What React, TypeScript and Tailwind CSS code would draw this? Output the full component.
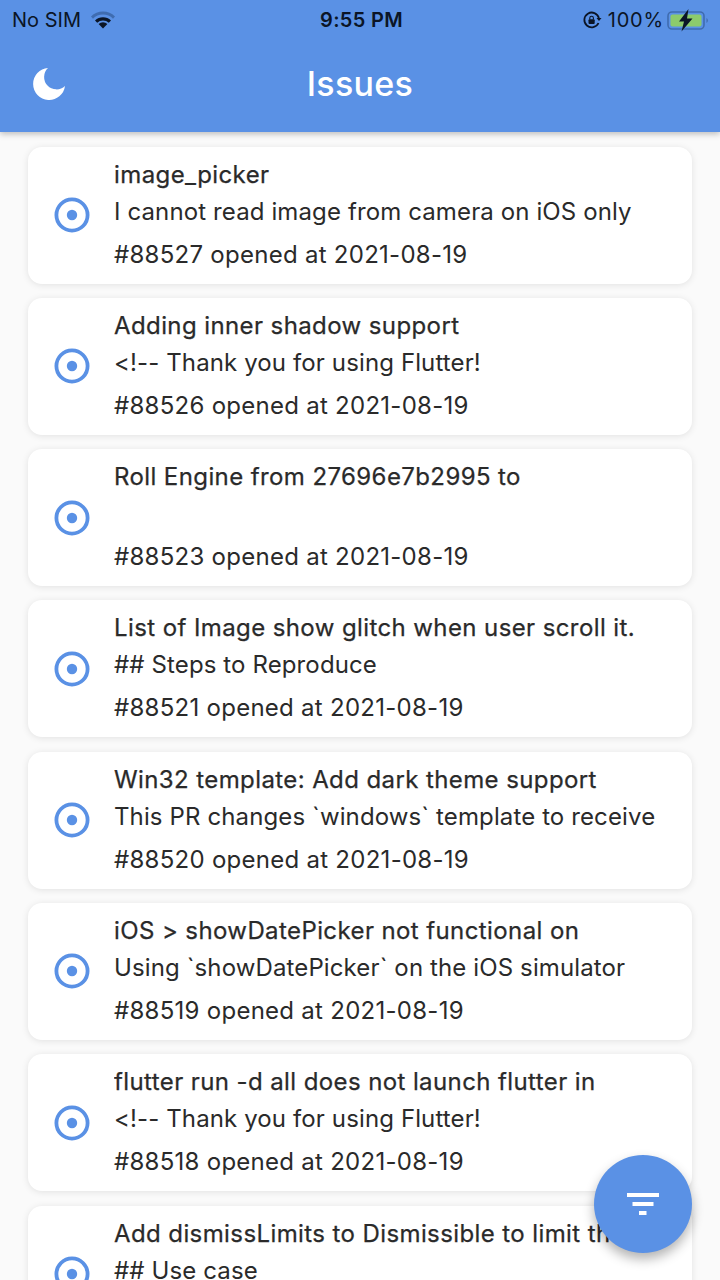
const issues = [
  { title: "image_picker", body: "I cannot read image from camera on iOS only", meta: "#88527 opened at 2021-08-19" },
  { title: "Adding inner shadow support", body: "<!-- Thank you for using Flutter!", meta: "#88526 opened at 2021-08-19" },
  { title: "Roll Engine from 27696e7b2995 to", body: "", meta: "#88523 opened at 2021-08-19" },
  { title: "List of Image show glitch when user scroll it.", body: "## Steps to Reproduce", meta: "#88521 opened at 2021-08-19" },
  { title: "Win32 template: Add dark theme support", body: "This PR changes `windows` template to receive", meta: "#88520 opened at 2021-08-19" },
  { title: "iOS > showDatePicker not functional on", body: "Using `showDatePicker` on the iOS simulator", meta: "#88519 opened at 2021-08-19" },
  { title: "flutter run -d all does not launch flutter in", body: "<!-- Thank you for using Flutter!", meta: "#88518 opened at 2021-08-19" },
  { title: "Add dismissLimits to Dismissible to limit the", body: "## Use case", meta: "" },
];

function StatusBar() {
  return (
    <div className="flex h-[38px] items-center justify-between pl-3 pr-[9px] pt-[1px] text-[20px] text-[#0b1526]">
      <div className="flex w-[200px] items-center gap-[9px]">
        <span>No SIM</span>
        <svg width="26" height="20" viewBox="0 0 26 20" className="-mt-[2px]">
          <path d="M1 7.5a17 17 0 0 1 24 0l-2 2.2a14 14 0 0 0-20 0z" fill="#3f6cb0" />
          <path d="M5 11.5a11.5 11.5 0 0 1 16 0l-2.200 2.300a8.500 8.500 0 0 0-11.600 0z" fill="#0b1526" />
          <path d="M8.600 15a6.500 6.500 0 0 1 8.800 0L13 19.500z" fill="#0b1526" />
        </svg>
      </div>
      <span className="font-semibold tracking-[0.3px]">9:55 PM</span>
      <div className="flex w-[200px] items-center justify-end gap-[6px]">
        <svg width="20" height="20" viewBox="0 0 20 20">
          <path d="M16.500 13a7.400 7.400 0 1 1 .4-5" fill="none" stroke="#0b1526" strokeWidth="1.8" />
          <path d="M14.500 8h5l-2.500 3z" fill="#0b1526" />
          <rect x="6.500" y="9.200" width="6.200" height="4.800" rx="1" fill="#0b1526" />
          <path d="M7.800 9.500V8a1.800 1.800 0 0 1 3.600 0v1.500" fill="none" stroke="#0b1526" strokeWidth="1.1" />
        </svg>
        <span className="tracking-[0.8px]">100%</span>
        <svg width="44" height="24" viewBox="0 0 44 24" className="-ml-[3px]">
          <rect x="1" y="4" width="36" height="17" rx="4" fill="none" stroke="#3f6cb0" strokeWidth="1.600" />
          <rect x="3.500" y="6.500" width="31" height="12" rx="2" fill="#8ccb6c" />
          <path d="M39.500 10v5a3 3 0 0 0 0-5z" fill="#3f6cb0" />
          <path d="M21.500 1 12 13.500h5L14.500 23.500 25.500 10.500h-5.500z" fill="#0b1526" />
        </svg>
      </div>
    </div>
  );
}

function OpenIcon() {
  return (
    <svg width="36" height="36" viewBox="0 0 36 36" className="shrink-0">
      <circle cx="18" cy="18" r="15.600" fill="none" stroke="#5a91e5" strokeWidth="3.800" />
      <circle cx="18" cy="18" r="5.200" fill="#5a91e5" />
    </svg>
  );
}

function IssueCard({ title, body, meta }: { title: string; body: string; meta: string }) {
  return (
    <div className="flex h-[137px] shrink-0 items-center gap-[24px] rounded-[14px] bg-white pl-[26px] shadow-[0_1px_7px_rgba(0,0,0,0.1)]">
      <OpenIcon />
      <div className="min-w-0 flex-1 self-start pr-[28px] pt-[9px] text-[24px] leading-[37px] text-[#2a2a2a]">
        <div className="h-[37px] overflow-hidden whitespace-nowrap tracking-[0.4px] [-webkit-text-stroke:0.25px_#2a2a2a]">{title}</div>
        <div className="h-[37px] overflow-hidden whitespace-nowrap tracking-[0.12px]">{body}</div>
        <div className="mt-[6px] h-[37px] whitespace-nowrap tracking-[0.27px]">{meta}</div>
      </div>
    </div>
  );
}

export default function App() {
  return (
    <div className="relative h-[1280px] w-[720px] overflow-hidden bg-[#fafafa] font-['Inter','Liberation_Sans',sans-serif]">
      <header className="relative z-10 h-[132px] bg-[#5a91e5] shadow-[0_2px_6px_rgba(0,0,0,0.25)]">
        <StatusBar />
        <div className="relative flex h-[94px] items-center justify-center pb-[4px]">
          <svg width="34" height="34" viewBox="0 0 34 34" className="absolute left-[32px] top-[29px]">
            <path d="M16 1A16 16 0 1 0 33 19 11.500 11.500 0 0 1 16 1z" fill="#ffffff" />
          </svg>
          <h1 className="text-[34px] font-medium tracking-[0.3px] text-white">Issues</h1>
        </div>
      </header>
      <main className="flex h-[1148px] flex-col gap-[14.3px] overflow-hidden px-[28px] pt-[14.5px]">
        {issues.map((issue) => (
          <IssueCard key={issue.title} title={issue.title} body={issue.body} meta={issue.meta} />
        ))}
      </main>
      <button
        type="button"
        className="absolute left-[594px] top-[1155px] flex h-[98px] w-[98px] items-center justify-center rounded-full bg-[#5a91e5] shadow-[0_6px_12px_rgba(0,0,0,0.3)]"
      >
        <svg width="32" height="22" viewBox="0 0 32 22">
          <path d="M0 0h32v4H0zM5.500 9h21v4h-21zM12 18h7.500v4H12z" fill="#ffffff" />
        </svg>
      </button>
    </div>
  );
}
